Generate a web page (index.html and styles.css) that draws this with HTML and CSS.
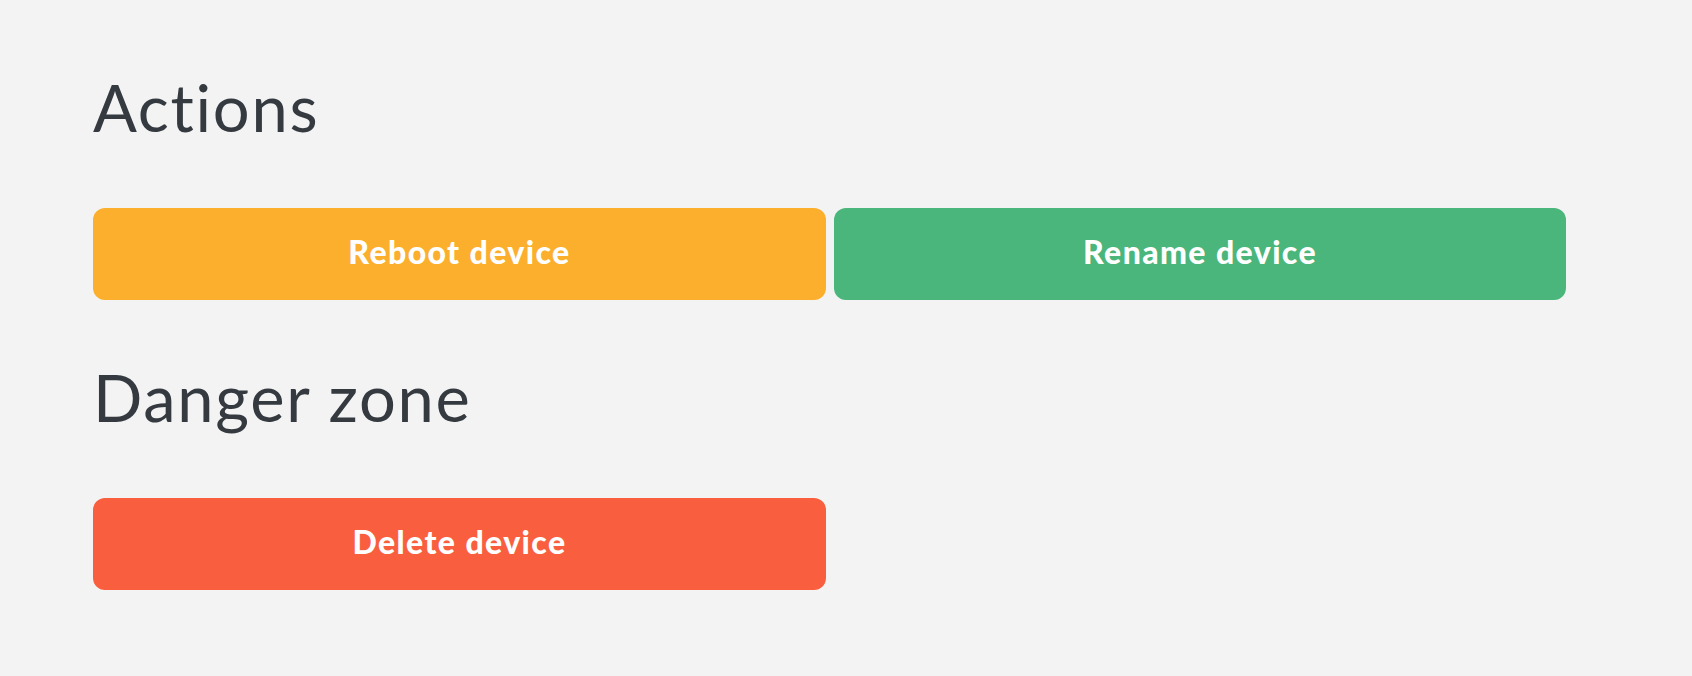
FILE: index.html
```html
<!DOCTYPE html>
<html lang="en">
<head>
<meta charset="utf-8">
<title>Device actions</title>
<link rel="stylesheet" href="styles.css">
</head>
<body>
<main class="page">
  <section class="section">
    <h1 class="section-title">Actions</h1>
    <div class="button-grid">
      <button class="btn btn-warning">Reboot device</button>
      <button class="btn btn-success">Rename device</button>
    </div>
  </section>
  <section class="section">
    <h1 class="section-title">Danger zone</h1>
    <div class="button-grid">
      <button class="btn btn-danger">Delete device</button>
    </div>
  </section>
</main>
</body>
</html>
```
FILE: styles.css
```css
html, body {
  margin: 0;
  padding: 0;
  background: #f3f3f3;
}

body {
  font-family: "Lato", "Open Sans", sans-serif;
  color: #343a3f;
  font-variant-ligatures: none;
}

.page {
  padding: 68px 0 0 93px;
  width: 1473px;
}

.section {
  display: flex;
  flex-direction: column;
}

.section + .section {
  margin-top: 58px;
}

.section-title {
  margin: 0 0 62px;
  font-size: 65px;
  font-weight: 400;
  line-height: 78px;
  letter-spacing: 1.7px;
}

.button-grid {
  display: grid;
  grid-template-columns: 733px 732px;
  column-gap: 8px;
}

.btn {
  height: 92px;
  border: none;
  border-radius: 12px;
  color: #ffffff;
  font-family: "Lato", "Open Sans", sans-serif;
  font-variant-ligatures: none;
  font-size: 32px;
  font-weight: 900;
  letter-spacing: 1.4px;
  cursor: pointer;
  padding: 0 0 5px;
}

.btn-warning { background: #fcaf2d; }
.btn-success { background: #4ab67b; }
.btn-danger { background: #f95f3e; }
```
